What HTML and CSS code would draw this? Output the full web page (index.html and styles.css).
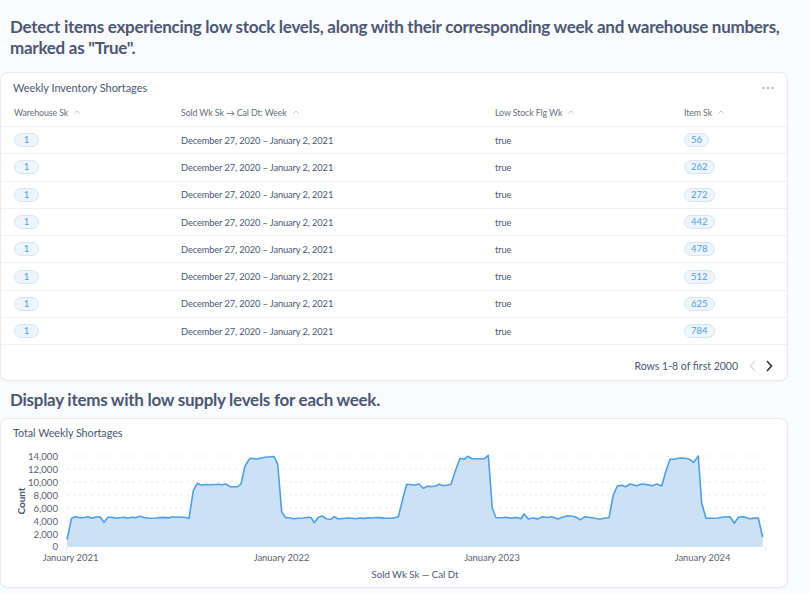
FILE: index.html
```html
<!DOCTYPE html>
<html>
<head>
<meta charset="utf-8">
<link rel="stylesheet" href="styles.css">
</head>
<body>
<div class="dashboard">
  <h2 class="section-heading first">Detect items experiencing low stock levels, along with their corresponding week and warehouse numbers, marked as "True".</h2>
  <div class="card table-card">
    <div class="card-head">
      <span class="card-title">Weekly Inventory Shortages</span>
      <svg class="more" width="12" height="4" viewBox="0 0 12 4"><circle cx="1.5" cy="2" r="1.2"/><circle cx="6" cy="2" r="1.2"/><circle cx="10.5" cy="2" r="1.2"/></svg>
    </div>
    <div class="row head">
      <span class="th">Warehouse Sk<svg class="caret" width="6" height="4" viewBox="0 0 6 4"><path d="M0.5 3.5 L3 1 L5.5 3.5"/></svg></span>
      <span class="th">Sold Wk Sk → Cal Dt: Week<svg class="caret" width="6" height="4" viewBox="0 0 6 4"><path d="M0.5 3.5 L3 1 L5.5 3.5"/></svg></span>
      <span class="th">Low Stock Flg Wk<svg class="caret" width="6" height="4" viewBox="0 0 6 4"><path d="M0.5 3.5 L3 1 L5.5 3.5"/></svg></span>
      <span class="th">Item Sk<svg class="caret" width="6" height="4" viewBox="0 0 6 4"><path d="M0.5 3.5 L3 1 L5.5 3.5"/></svg></span>
    </div>
    <div class="row"><span><span class="pill">1</span></span><span>December 27, 2020 – January 2, 2021</span><span>true</span><span><span class="pill">56</span></span></div>
    <div class="row"><span><span class="pill">1</span></span><span>December 27, 2020 – January 2, 2021</span><span>true</span><span><span class="pill">262</span></span></div>
    <div class="row"><span><span class="pill">1</span></span><span>December 27, 2020 – January 2, 2021</span><span>true</span><span><span class="pill">272</span></span></div>
    <div class="row"><span><span class="pill">1</span></span><span>December 27, 2020 – January 2, 2021</span><span>true</span><span><span class="pill">442</span></span></div>
    <div class="row"><span><span class="pill">1</span></span><span>December 27, 2020 – January 2, 2021</span><span>true</span><span><span class="pill">478</span></span></div>
    <div class="row"><span><span class="pill">1</span></span><span>December 27, 2020 – January 2, 2021</span><span>true</span><span><span class="pill">512</span></span></div>
    <div class="row"><span><span class="pill">1</span></span><span>December 27, 2020 – January 2, 2021</span><span>true</span><span><span class="pill">625</span></span></div>
    <div class="row"><span><span class="pill">1</span></span><span>December 27, 2020 – January 2, 2021</span><span>true</span><span><span class="pill">784</span></span></div>
    <div class="table-foot">
      <span class="rows-info">Rows 1-8 of first 2000</span>
      <svg class="chev prev" width="8" height="12" viewBox="0 0 8 12"><path d="M6 1 L1.5 6 L6 11"/></svg>
      <svg class="chev next" width="8" height="12" viewBox="0 0 8 12"><path d="M2 1 L6.5 6 L2 11"/></svg>
    </div>
  </div>
  <h2 class="section-heading second">Display items with low supply levels for each week.</h2>
  <div class="card chart-card">
    <div class="card-head chart-head"><span class="card-title">Total Weekly Shortages</span></div>
    <svg class="chart" width="786" height="146" viewBox="1 441 786 146">
      <g class="grid">
        <line x1="67" y1="456" x2="765" y2="456"/>
        <line x1="67" y1="469" x2="765" y2="469"/>
        <line x1="67" y1="482" x2="765" y2="482"/>
        <line x1="67" y1="495" x2="765" y2="495"/>
        <line x1="67" y1="508" x2="765" y2="508"/>
        <line x1="67" y1="521" x2="765" y2="521"/>
        <line x1="67" y1="534" x2="765" y2="534"/>
      </g>
      <g class="ticks">
        <line x1="66.5" y1="547" x2="66.5" y2="551"/>
        <line x1="765.5" y1="547" x2="765.5" y2="551"/>
      </g>
      <g class="ylab">
        <text x="58" y="460">14,000</text>
        <text x="58" y="473">12,000</text>
        <text x="58" y="486">10,000</text>
        <text x="58" y="499">8,000</text>
        <text x="58" y="512">6,000</text>
        <text x="58" y="525">4,000</text>
        <text x="58" y="538">2,000</text>
        <text x="58" y="550">0</text>
      </g>
      <text class="ytitle" transform="translate(25 501) rotate(-90)">Count</text>
      <polygon class="area" points="67,547 67,539.5 71.5,518.3 75.5,516.7 80,517.7 84,517.5 88,516.8 92,518.2 96,517 100,516.8 104,522.3 108,517.2 112,517.2 116,518.3 120,517.8 124,517.3 128,518.3 132,517.3 136,517.6 140,516.3 144,517.5 148,518 152,518.2 156,518 160,517.6 164,517.4 168,517.9 172,517 176,517 180,517.3 184,517.3 189,518.3 193.3,490.7 197.3,483.3 200.7,485 205,484.5 210,484.7 215,484.5 219,484.3 222,484.8 226,484 230,486.7 237.7,486.7 241,484 245,466 250,458.3 256.7,459 265,457.3 274,456.5 277.7,464 281.7,511.7 285.7,517.7 289,517.7 293.3,518.7 298,518.2 303,518 308.3,517.3 311,517.5 314.3,522.7 318.3,517.3 322.3,516 326.7,519 330.7,519.3 334.3,516.7 338.3,519 343,518.5 348,518 352,518.3 356,518.7 360,518 364,518.4 368,517.9 372,518 376,517.5 380,517.6 384,518.1 388,518.3 391.7,518.3 395,517.8 398.3,516.7 403.3,496.7 406.7,484.3 412,484.7 415,485 419,484 423.3,488.3 427.7,486.3 432,486.5 436,486 439,484.3 443.3,485.7 447,485.3 451,484.3 455,471.7 460,458.3 464,459.3 467.7,456.3 472.3,458.7 478,458.7 484.3,458.7 488.3,455.3 492.3,508.3 496,517.7 501.7,517.7 506,517.2 511,518.3 516,517.4 521,518.7 524,514 528.3,519 533,518 538,518.9 542.3,516.7 547,517.5 552,516.7 557.7,519 562,517.2 568.3,515.7 575,516.7 580.7,519.7 585,516.7 590,517.5 595,518.3 600,519.3 605,518 609,517.7 613.3,495 617.3,486 621.7,485.3 625.7,486.7 630,484 636.7,485.7 641.7,484 647,484.6 652.3,485.7 656.7,484 661.7,486 665.7,471.7 670,459.3 674.3,459.3 678.3,458.3 682.3,458 688.3,458.7 693.7,462.3 698.3,456 701.7,503.3 706,518.3 712,518.2 718.3,518 723.3,517 730,516.7 734.3,523.3 738.3,517.3 743.3,516.7 750,518.7 754,518.1 758.3,518 762.7,537.3 762.7,547"/>
      <polyline class="line" points="67,539.5 71.5,518.3 75.5,516.7 80,517.7 84,517.5 88,516.8 92,518.2 96,517 100,516.8 104,522.3 108,517.2 112,517.2 116,518.3 120,517.8 124,517.3 128,518.3 132,517.3 136,517.6 140,516.3 144,517.5 148,518 152,518.2 156,518 160,517.6 164,517.4 168,517.9 172,517 176,517 180,517.3 184,517.3 189,518.3 193.3,490.7 197.3,483.3 200.7,485 205,484.5 210,484.7 215,484.5 219,484.3 222,484.8 226,484 230,486.7 237.7,486.7 241,484 245,466 250,458.3 256.7,459 265,457.3 274,456.5 277.7,464 281.7,511.7 285.7,517.7 289,517.7 293.3,518.7 298,518.2 303,518 308.3,517.3 311,517.5 314.3,522.7 318.3,517.3 322.3,516 326.7,519 330.7,519.3 334.3,516.7 338.3,519 343,518.5 348,518 352,518.3 356,518.7 360,518 364,518.4 368,517.9 372,518 376,517.5 380,517.6 384,518.1 388,518.3 391.7,518.3 395,517.8 398.3,516.7 403.3,496.7 406.7,484.3 412,484.7 415,485 419,484 423.3,488.3 427.7,486.3 432,486.5 436,486 439,484.3 443.3,485.7 447,485.3 451,484.3 455,471.7 460,458.3 464,459.3 467.7,456.3 472.3,458.7 478,458.7 484.3,458.7 488.3,455.3 492.3,508.3 496,517.7 501.7,517.7 506,517.2 511,518.3 516,517.4 521,518.7 524,514 528.3,519 533,518 538,518.9 542.3,516.7 547,517.5 552,516.7 557.7,519 562,517.2 568.3,515.7 575,516.7 580.7,519.7 585,516.7 590,517.5 595,518.3 600,519.3 605,518 609,517.7 613.3,495 617.3,486 621.7,485.3 625.7,486.7 630,484 636.7,485.7 641.7,484 647,484.6 652.3,485.7 656.7,484 661.7,486 665.7,471.7 670,459.3 674.3,459.3 678.3,458.3 682.3,458 688.3,458.7 693.7,462.3 698.3,456 701.7,503.3 706,518.3 712,518.2 718.3,518 723.3,517 730,516.7 734.3,523.3 738.3,517.3 743.3,516.7 750,518.7 754,518.1 758.3,518 762.7,537.3"/>
      <g class="xlab">
        <text x="70.5" y="560.5">January 2021</text>
        <text x="281.5" y="560.5">January 2022</text>
        <text x="492" y="560.5">January 2023</text>
        <text x="702.5" y="560.5">January 2024</text>
      </g>
      <text class="xtitle" x="415" y="578">Sold Wk Sk — Cal Dt</text>
    </svg>
  </div>
</div>
</body>
</html>
```

FILE: styles.css
```css
* { box-sizing: border-box; }
html, body { margin: 0; padding: 0; }
body {
  background: #f9fbfc;
  font-family: Lato, "Noto Sans", sans-serif;
  color: #4c5773;
  width: 810px;
  height: 594px;
  overflow: hidden;
}
.dashboard {
  width: 786px;
  margin-left: 1px;
  display: flex;
  flex-direction: column;
}
.section-heading {
  margin: 0;
  padding-left: 9px;
  font-size: 17px;
  line-height: 21px;
  letter-spacing: -0.27px;
  font-weight: 700;
  color: #4c5773;
}
.section-heading.first { padding-top: 16px; margin-bottom: 15px; }
.section-heading.second { margin-top: 9px; margin-bottom: 9px; }
.card {
  background: #fff;
  border-radius: 7px;
  box-shadow: 0 0 0 1px rgba(220, 224, 232, 0.55), 0 1px 3px rgba(0, 0, 0, 0.06);
}
.table-card { height: 307px; display: flex; flex-direction: column; }
.card-head {
  height: 25px;
  padding: 8px 12px 0 12px;
  display: flex;
  justify-content: space-between;
  align-items: flex-start;
}
.card-title {
  font-size: 11px;
  line-height: 14px;
  letter-spacing: -0.05px;
  color: #4c5773;
}
.more { margin-top: 5px; margin-right: 1px; fill: #b4b8c0; }
.row {
  display: grid;
  grid-template-columns: 167px 314px 189px 1fr;
  padding-left: 13px;
  height: 27.3px;
  align-items: center;
  border-bottom: 1px solid #f0f1f3;
  font-size: 9.3px;
  letter-spacing: -0.12px;
  color: #4c5773;
}
.row.head { height: 29px; color: #696e7b; font-size: 8.8px; letter-spacing: -0.1px; }
.th { display: flex; align-items: center; }
.caret { margin-left: 6px; fill: none; stroke: #c3c6cc; stroke-width: 1; }
.pill {
  display: inline-block;
  min-width: 25px;
  height: 14px;
  line-height: 12px;
  padding: 0 6px;
  border: 1px solid #d6e6f7;
  border-radius: 7px;
  background: #eef5fc;
  color: #509ee3;
  font-size: 9.5px;
  letter-spacing: 0;
  text-align: center;
}
.table-foot {
  flex: 1;
  display: flex;
  justify-content: flex-end;
  align-items: center;
  padding-right: 14px;
  padding-top: 7px;
}
.rows-info { font-size: 10.5px; color: #4c5773; margin-right: 11px; }
.chev { fill: none; stroke-width: 1.6; }
.chev.prev { stroke: #dfe1e5; margin-right: 8px; }
.chev.next { stroke: #2e353b; }
.chart-card { height: 168px; display: flex; flex-direction: column; }
.chart-head { height: 22px; padding-top: 7px; }
.chart-head .card-title { font-size: 10.8px; }
.chart { display: block; }
.grid line { stroke: #e6e8eb; stroke-width: 1; stroke-dasharray: 2 4; }
.ticks line { stroke: #e4e6ea; stroke-width: 1; }
.ylab text { font-size: 9.6px; fill: #5b6176; text-anchor: end; font-family: Lato, sans-serif; }
.ytitle { font-size: 10px; font-weight: 700; fill: #4c5773; text-anchor: middle; font-family: Lato, sans-serif; }
.area { fill: #cbe1f6; stroke: none; }
.line { fill: none; stroke: #509ee3; stroke-width: 1.6; stroke-linejoin: round; }
.xlab text { font-size: 9.4px; fill: #5b6176; text-anchor: middle; font-family: Lato, sans-serif; }
.xtitle { font-size: 9.6px; fill: #4c5773; text-anchor: middle; font-family: Lato, sans-serif; }
```
